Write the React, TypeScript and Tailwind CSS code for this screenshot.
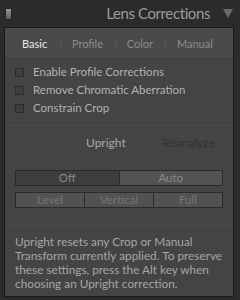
import React from "react";

const font = { fontFamily: "Lato, 'Open Sans', sans-serif" };

function Check({ label }: { label: string }) {
  return (
    <div className="flex items-center h-[18px]">
      <div className="w-[9px] h-[9px] ml-[10px] border border-[#2c2c2c] bg-[#3e3e3e]" />
      <span className="ml-[9px] text-[11.5px] text-[#b2b2b2] leading-none">{label}</span>
    </div>
  );
}

export default function App() {
  return (
    <div className="w-[240px] h-[300px] bg-[#2b2b2b] flex flex-col overflow-hidden" style={font}>
      <div className="h-[27px] flex items-center relative">
        <div className="ml-[5px] w-[7px] h-[12px] rounded-[1px] bg-gradient-to-b from-[#9a9a9a] to-[#5a5a5a] border border-[#222]" />
        <span className="ml-auto mr-[13px] text-[15px] tracking-[-0.4px] text-[#9c9c9c] leading-none">Lens Corrections</span>
        <svg width="10" height="9" viewBox="0 0 10 9" className="mr-[7px]">
          <path d="M0 0 L10 0 L5 9 Z" fill="#6a6a6a" />
        </svg>
      </div>
      <div className="ml-[4px] w-[230px] h-[270px] border border-[#1a1a1a] bg-[#444444] flex flex-col">
        <div className="h-[31px] bg-[#4a4a4a] border-b border-[#3a3a3a] flex items-center text-[11px] leading-none">
          <span className="ml-[17px] text-[#e6e6e6]">Basic</span>
          <span className="ml-[12px] text-[#5e5e5e]">|</span>
          <span className="ml-[10px] text-[#8c8c8c]">Profile</span>
          <span className="ml-[12px] text-[#5e5e5e]">|</span>
          <span className="ml-[9px] text-[#8c8c8c]">Color</span>
          <span className="ml-[11px] text-[#5e5e5e]">|</span>
          <span className="ml-[10px] text-[#8c8c8c]">Manual</span>
        </div>
        <div className="pt-[4px] flex flex-col">
          <Check label="Enable Profile Corrections" />
          <Check label="Remove Chromatic Aberration" />
          <Check label="Constrain Crop" />
        </div>
        <div className="mt-[8px] h-px bg-[#4b4b4b]" />
        <div className="h-[34px] flex items-center text-[12px] leading-none">
          <span className="ml-[81px] text-[#a8a8a8]">Upright</span>
          <span className="ml-auto mr-[18px] text-[#333333]">Reanalyze</span>
        </div>
        <div className="mx-[10px] mt-[10px] flex h-[16px] text-[11.5px] leading-none">
          <div className="flex-1 flex items-center justify-center bg-[#3d3d3d] border border-[#2a2a2a] text-[#8a8a8a]">Off</div>
          <div className="flex-1 flex items-center justify-center bg-[#535353] border border-[#2a2a2a] border-l-0 text-[#8a8a8a]">Auto</div>
        </div>
        <div className="mx-[10px] mt-[6px] flex h-[16px] text-[11.5px] leading-none">
          <div className="flex-1 flex items-center justify-center bg-[#525252] border border-[#2a2a2a] text-[#747474]">Level</div>
          <div className="flex-1 flex items-center justify-center bg-[#525252] border border-[#2a2a2a] border-l-0 text-[#747474]">Vertical</div>
          <div className="flex-1 flex items-center justify-center bg-[#525252] border border-[#2a2a2a] border-l-0 text-[#747474]">Full</div>
        </div>
        <div className="mt-[17px] h-px bg-[#4b4b4b]" />
        <p className="mx-[10px] mt-[9px] text-[11.8px] leading-[14px] text-[#a6a6a6]">
          Upright resets any Crop or Manual Transform currently applied. To preserve these settings, press the Alt key when choosing an Upright correction.
        </p>
      </div>
    </div>
  );
}
